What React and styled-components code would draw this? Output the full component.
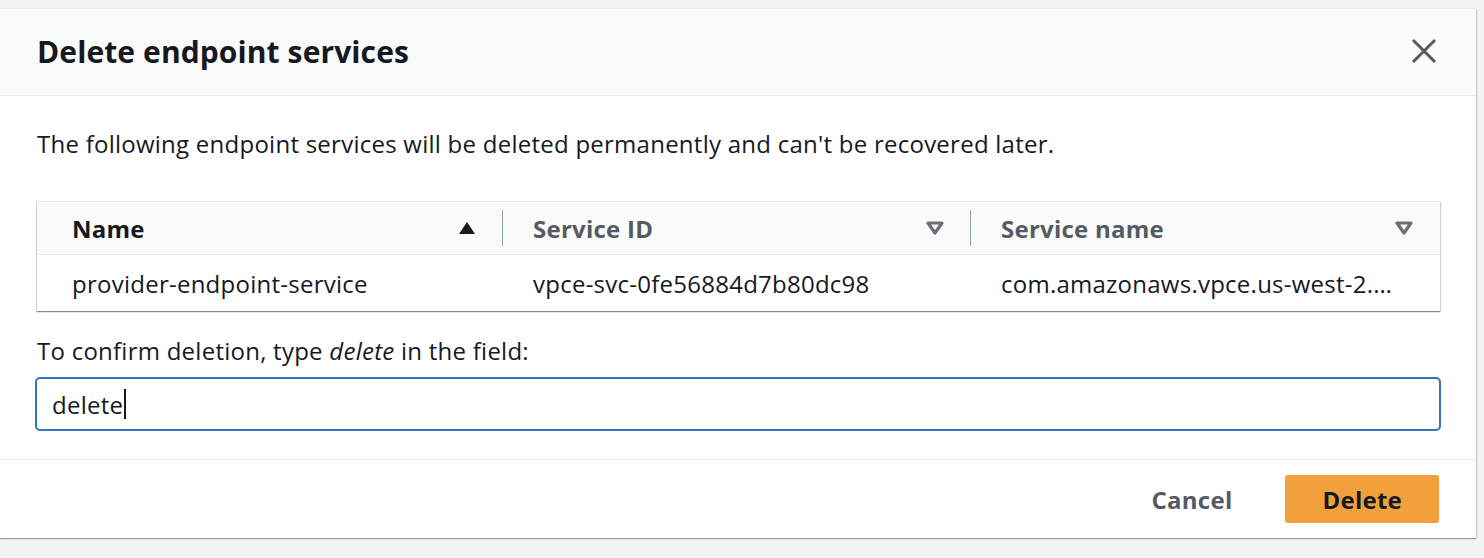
import React from "react";
import styled, { createGlobalStyle } from "styled-components";

const GlobalStyle = createGlobalStyle`
  body {
    margin: 0;
    background: #f2f3f3;
    font-family: "Open Sans", "Noto Sans", sans-serif;
    color: #16191f;
  }
`;

const Page = styled.div`
  height: 558px;
  padding-top: 8px;
  box-sizing: border-box;
  overflow: hidden;
`;

const Modal = styled.div`
  width: 1476px;
  background: #fff;
  border-top: 1px solid #eaeded;
  box-shadow: 0 1px 1px 0 rgba(0, 28, 36, 0.3), 1px 1px 1px 0 rgba(0, 28, 36, 0.15);
`;

const Header = styled.div`
  height: 86px;
  display: flex;
  align-items: center;
  justify-content: space-between;
  padding: 0 37px;
  background: #fafafa;
  border-bottom: 1px solid #eaeded;
`;

const Title = styled.h2`
  margin: 0 0 2px;
  font-size: 30px;
  font-weight: 700;
  letter-spacing: 0.1px;
  color: #16191f;
`;

const CloseButton = styled.button`
  border: none;
  background: none;
  padding: 0;
  margin: 0 2px 2px 0;
  display: flex;
  cursor: pointer;
`;

const Body = styled.div`
  padding: 32px 36px 28px 37px;
  font-size: 24px;
  letter-spacing: 0.25px;
`;

const Text = styled.p`
  margin: 0;
  line-height: 32px;
`;

const Table = styled.div`
  margin-top: 41px;
  border-top: 1px solid #eaeded;
  box-shadow: 0 1px 1px 0 rgba(0, 28, 36, 0.3), 1px 1px 1px 0 rgba(0, 28, 36, 0.15),
    -1px 1px 1px 0 rgba(0, 28, 36, 0.15);
`;

const Row = styled.div`
  display: grid;
  grid-template-columns: 466px 468px 1fr;
  height: ${(p) => (p.$head ? "52px" : "56px")};
  background: ${(p) => (p.$head ? "#fafafa" : "#fff")};
  border-bottom: ${(p) => (p.$head ? "1px solid #eaeded" : "none")};
`;

const HeadCell = styled.div`
  display: flex;
  align-items: center;
  justify-content: space-between;
  padding: 0 27px 0 ${(p) => (p.$first ? "35px" : "30px")};
  font-weight: 700;
  color: ${(p) => (p.$active ? "#16191f" : "#545b64")};
  position: relative;

  &::after {
    content: "";
    display: ${(p) => (p.$last ? "none" : "block")};
    position: absolute;
    right: 0;
    top: 8px;
    bottom: 8px;
    width: 1px;
    background: #95a5a6;
  }
`;

const Cell = styled.div`
  display: flex;
  align-items: center;
  padding: 0 30px 0 ${(p) => (p.$first ? "35px" : "30px")};
  white-space: nowrap;
  overflow: hidden;
`;

const Label = styled.label`
  display: block;
  margin-top: 24px;
  line-height: 32px;
`;

const InputWrap = styled.div`
  margin: 10px -1px 0 -2px;
  height: 54px;
  box-sizing: border-box;
  border: 2px solid #3574bb;
  border-radius: 5px;
  display: flex;
  align-items: center;
  padding: 0 15px;
`;

const Caret = styled.span`
  display: inline-block;
  width: 1.5px;
  height: 30px;
  background: #16191f;
  margin-left: 1px;
`;

const Footer = styled.div`
  height: 78px;
  border-top: 1px solid #eaeded;
  display: flex;
  align-items: center;
  justify-content: flex-end;
  gap: 29px;
  padding: 0 37px;
`;

const Button = styled.button`
  height: 48px;
  border: none;
  border-radius: 3px;
  padding: 0 ${(p) => (p.$primary ? "37px" : "24px")};
  font-family: inherit;
  font-size: 24px;
  letter-spacing: 0.25px;
  font-weight: 700;
  background: ${(p) => (p.$primary ? "#f2a03b" : "transparent")};
  color: ${(p) => (p.$primary ? "#16191f" : "#545b64")};
  cursor: pointer;
`;

const SortUp = () => (
  <svg width="18" height="14" viewBox="0 0 18 14">
    <path d="M9 1 L17 13 L1 13 Z" fill="#16191f" />
  </svg>
);

const SortDown = () => (
  <svg width="18" height="14" viewBox="0 0 18 14">
    <path d="M2 2 L16 2 L9 12 Z" fill="none" stroke="#687078" strokeWidth="3.2" strokeLinejoin="round" />
  </svg>
);

export default function App() {
  return (
    <>
      <GlobalStyle />
      <Page>
        <Modal>
          <Header>
            <Title>Delete endpoint services</Title>
            <CloseButton aria-label="Close">
              <svg width="26" height="26" viewBox="0 0 26 26">
                <path d="M2 2 L24 24 M24 2 L2 24" stroke="#545b64" strokeWidth="3" />
              </svg>
            </CloseButton>
          </Header>
          <Body>
            <Text>The following endpoint services will be deleted permanently and can't be recovered later.</Text>
            <Table>
              <Row $head>
                <HeadCell $first $active>
                  Name <SortUp />
                </HeadCell>
                <HeadCell>
                  Service ID <SortDown />
                </HeadCell>
                <HeadCell $last>
                  Service name <SortDown />
                </HeadCell>
              </Row>
              <Row>
                <Cell $first>provider-endpoint-service</Cell>
                <Cell>vpce-svc-0fe56884d7b80dc98</Cell>
                <Cell>com.amazonaws.vpce.us-west-2.…</Cell>
              </Row>
            </Table>
            <Label>
              To confirm deletion, type <i>delete</i> in the field:
            </Label>
            <InputWrap>
              delete
              <Caret />
            </InputWrap>
          </Body>
          <Footer>
            <Button>Cancel</Button>
            <Button $primary>Delete</Button>
          </Footer>
        </Modal>
      </Page>
    </>
  );
}
